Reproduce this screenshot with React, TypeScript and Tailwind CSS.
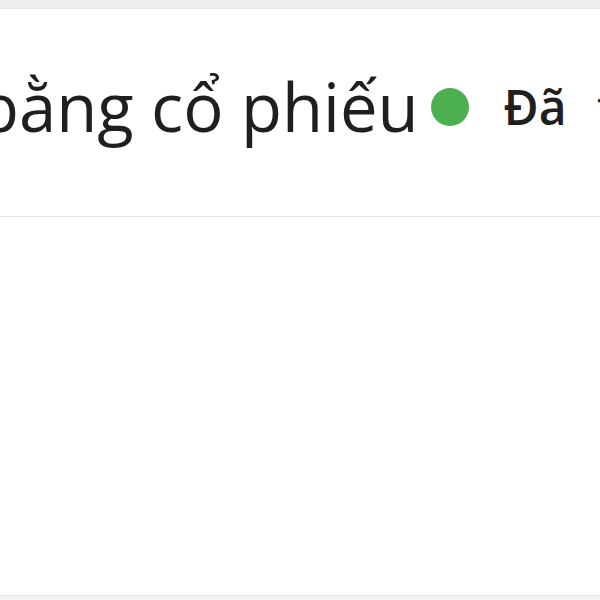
import React from 'react';

export default function App() {
  return (
    <div
      className="w-[600px] h-[600px] bg-white overflow-hidden flex flex-col text-[#1f1f1f]"
      style={{ fontFamily: '"Open Sans", "Noto Sans", sans-serif' }}
    >
      {/* top edge of the page behind the card */}
      <div className="h-[9px] shrink-0 bg-[#efefef] border-b border-[#e9e9e9]" />

      {/* card header */}
      <div className="h-[208px] shrink-0 border-b border-[#e6e6e6] flex items-center pb-[12px] -ml-[22px] whitespace-nowrap">
        <span className="text-[67px] leading-none font-medium">bằng cổ phiếu</span>
        <span className="ml-[12px] w-[38px] h-[38px] rounded-full bg-[#4caf50] shrink-0" />
        <span className="ml-[35px] text-[48px] leading-none font-semibold [word-spacing:18px]">Đã thanh toán</span>
      </div>

      {/* card body */}
      <div className="flex-1" />

      {/* bottom edge */}
      <div className="h-[5px] shrink-0 border-t border-[#e6e6e6] bg-[#f4f4f4]" />
    </div>
  );
}
